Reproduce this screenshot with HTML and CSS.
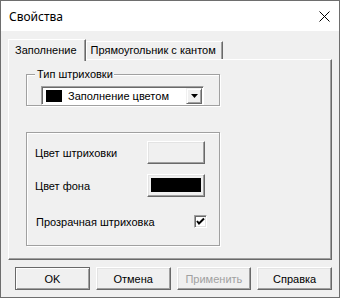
FILE: index.html
```html
<!DOCTYPE html>
<html lang="ru">
<head>
  <meta charset="UTF-8" />
  <title>Свойства</title>
  <link rel="stylesheet" href="styles.css">
</head>
<body>
  <div class="window">
    <div class="titlebar">
      <span class="title">Свойства</span>
      <svg class="close" width="11" height="11" viewBox="0 0 11 11">
        <path d="M0.5 0.5 L10.5 10.5 M10.5 0.5 L0.5 10.5" stroke="#000" stroke-width="1" fill="none"/>
      </svg>
    </div>

    <div class="content">
      <div class="tabs">
        <div class="tab active">Заполнение</div>
        <div class="tab">Прямоугольник с кантом</div>
      </div>

      <div class="panel">
        <div class="group type-group">
          <span class="group-title">Тип штриховки</span>
          <div class="combo">
            <span class="swatch"></span>
            <span class="combo-text">Заполнение цветом</span>
            <span class="combo-btn">
              <svg width="7" height="4" viewBox="0 0 7 4"><path d="M0 0 H7 L3.5 4 Z" fill="#000"/></svg>
            </span>
          </div>
        </div>

        <div class="group colors-group">
          <div class="row">
            <span class="label">Цвет штриховки</span>
            <button class="color-btn"></button>
          </div>
          <div class="row">
            <span class="label">Цвет фона</span>
            <button class="color-btn"><span class="color-fill"></span></button>
          </div>
          <div class="row check-row">
            <span class="label">Прозрачная штриховка</span>
            <span class="checkbox">
              <svg width="9" height="9" viewBox="0 0 9 9"><path d="M1 4 L3 6.5 L8 1.5" stroke="#000" stroke-width="2" fill="none"/></svg>
            </span>
          </div>
        </div>
      </div>

      <div class="buttons">
        <button class="btn default">OK</button>
        <button class="btn">Отмена</button>
        <button class="btn disabled">Применить</button>
        <button class="btn">Справка</button>
      </div>
    </div>
  </div>
</body>
</html>
```

FILE: styles.css
```css
:root {
  --face: #f0f0f0;
  --light: #ffffff;
  --shadow: #a0a0a0;
  --dark: #696969;
  --ui-font: "Noto Sans", "Open Sans", sans-serif;
  --old-font: "Liberation Sans", Arial, sans-serif;
}
* {
  margin: 0;
  padding: 0;
  box-sizing: border-box;
}
body {
  background: #fff;
}
.window {
  width: 340px;
  height: 298px;
  border: 1px solid #6e6e6e;
  background: var(--face);
  display: flex;
  flex-direction: column;
}
.titlebar {
  height: 30px;
  background: #fff;
  display: flex;
  align-items: center;
  justify-content: space-between;
  padding: 0 9px 0 8px;
}
.title {
  font-family: var(--ui-font);
  font-size: 12px;
  color: #000;
}
.close {
  margin-top: 1px;
}
.content {
  padding: 8px 7px 0 7px;
}
.tabs {
  display: flex;
  align-items: flex-end;
  height: 20px;
  position: relative;
  z-index: 1;
}
.tab {
  font-family: var(--old-font);
  font-size: 11px;
  color: #000;
  height: 18px;
  line-height: 16px;
  padding: 0 6px 0 4px;
  background: var(--face);
  border: 1px solid var(--light);
  border-bottom: none;
  border-right: 1px solid var(--dark);
  box-shadow: inset -1px 0 var(--shadow);
}
.tab.active {
  height: 22px;
  margin-bottom: -2px;
  padding: 2px 8px 0 6px;
  line-height: 16px;
}
.panel {
  height: 201px;
  border: 1px solid;
  border-color: var(--light) var(--dark) var(--dark) var(--light);
  box-shadow: inset -1px -1px var(--shadow);
  padding: 14px 0 0 17px;
}
.group {
  position: relative;
  width: 194px;
  border: 1px solid var(--shadow);
  box-shadow: inset 1px 1px var(--light), 1px 1px var(--light);
  font-family: var(--old-font);
  font-size: 11px;
  color: #000;
}
.group-title {
  position: absolute;
  top: -8px;
  left: 8px;
  padding: 0 1px 0 2px;
  background: var(--face);
  line-height: 14px;
}
.type-group {
  height: 32px;
  padding: 11px 0 0 14px;
}
.combo {
  width: 163px;
  height: 19px;
  background: #fff;
  border: 1px solid;
  border-color: var(--shadow) var(--light) var(--light) var(--shadow);
  box-shadow: inset 1px 1px var(--dark);
  display: flex;
  align-items: center;
  padding: 0 1px 0 4px;
}
.swatch {
  width: 16px;
  height: 12px;
  background: #000;
  margin-right: 6px;
}
.combo-text {
  flex: 1;
}
.combo-btn {
  width: 16px;
  height: 16px;
  background: var(--face);
  border: 1px solid;
  border-color: var(--face) var(--dark) var(--dark) var(--face);
  box-shadow: inset 1px 1px var(--light), inset -1px -1px var(--shadow);
  display: flex;
  align-items: center;
  justify-content: center;
}
.colors-group {
  height: 114px;
  margin-top: 26px;
  padding: 8px 14px 0 8px;
  display: flex;
  flex-direction: column;
  gap: 10px;
}
.row {
  display: flex;
  align-items: center;
  justify-content: space-between;
}
.color-btn {
  width: 58px;
  height: 23px;
  background: var(--face);
  border: 1px solid;
  border-color: var(--light) var(--dark) var(--dark) var(--light);
  box-shadow: inset -1px -1px var(--shadow), inset 1px 1px #e3e3e3;
  padding: 3px 3px 4px 3px;
  display: flex;
}
.color-fill {
  flex: 1;
  background: #000;
}
.check-row {
  margin-top: 8px;
  padding: 0 0 0 1px;
  margin-right: -2px;
}
.checkbox {
  width: 13px;
  height: 13px;
  background: #fff;
  border: 1px solid;
  border-color: var(--shadow) var(--light) var(--light) var(--shadow);
  box-shadow: inset 1px 1px var(--dark), inset -1px -1px #e3e3e3;
  display: flex;
  align-items: center;
  justify-content: center;
}
.buttons {
  display: flex;
  gap: 6px;
  padding: 7px 0 0 7px;
}
.btn {
  width: 75px;
  height: 23px;
  background: var(--face);
  font-family: var(--old-font);
  font-size: 11px;
  color: #000;
  border: 1px solid;
  border-color: var(--light) var(--dark) var(--dark) var(--light);
  box-shadow: inset -1px -1px var(--shadow), inset 1px 1px #e3e3e3;
}
.btn.default {
  border-color: var(--dark);
  box-shadow: inset 1px 1px var(--light), inset -1px -1px var(--shadow);
}
.btn.disabled {
  color: #a0a0a0;
}
```
